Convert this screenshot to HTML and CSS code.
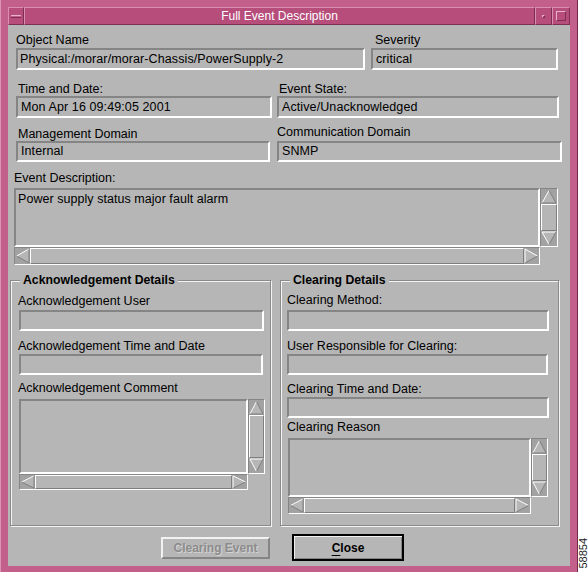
FILE: index.html
```html
<!DOCTYPE html>
<html>
<head>
<meta charset="utf-8">
<title>Full Event Description</title>
<link rel="stylesheet" href="styles.css">
</head>
<body>
<div class="screen">
  <div class="window">
    <div class="titlebar">
      <div class="tb-btn tb-menu"><span class="tb-minus"></span></div>
      <div class="tb-title">Full Event Description</div>
      <div class="tb-btn tb-min"><span class="tb-dot"></span></div>
      <div class="tb-btn tb-max"><span class="tb-square"></span></div>
    </div>
    <div class="client">
      <div class="row row1">
        <div class="cell c-obj"><div class="label">Object Name</div><div class="field">Physical:/morar/morar-Chassis/PowerSupply-2</div></div>
        <div class="cell c-sev"><div class="label">Severity</div><div class="field">critical</div></div>
      </div>
      <div class="row row2">
        <div class="cell c-time"><div class="label">Time and Date:</div><div class="field">Mon Apr 16 09:49:05 2001</div></div>
        <div class="cell c-state"><div class="label">Event State:</div><div class="field">Active/Unacknowledged</div></div>
      </div>
      <div class="row row3">
        <div class="cell c-mgmt"><div class="label">Management Domain</div><div class="field field-s">Internal</div></div>
        <div class="cell c-comm"><div class="label">Communication Domain</div><div class="field field-s">SNMP</div></div>
      </div>
      <div class="label l-desc">Event Description:</div>
      <div class="scrolled s-desc">
        <div class="stext">Power supply status major fault alarm</div>
        <div class="vscroll">
          <svg class="arrow" viewBox="0 0 16 15" preserveAspectRatio="none"><polygon points="8,1.5 15,14 1,14" fill="#b6b6b6"/><polyline points="1,14 8,1.5" stroke="#fff" fill="none"/><polyline points="8,1.5 15,14 1,14" stroke="#7e7e7e" fill="none"/></svg>
          <div class="slider"></div>
          <svg class="arrow" viewBox="0 0 16 15" preserveAspectRatio="none"><polygon points="1,1 15,1 8,13.5" fill="#b6b6b6"/><polyline points="8,13.5 1,1 15,1" stroke="#fff" fill="none"/><polyline points="15,1 8,13.5" stroke="#7e7e7e" fill="none"/></svg>
        </div>
        <div class="hscroll">
          <svg class="harrow" viewBox="0 0 15 16" preserveAspectRatio="none"><polygon points="1.5,8 14,1 14,15" fill="#b6b6b6"/><polyline points="14,1 1.5,8" stroke="#fff" fill="none"/><polyline points="1.5,8 14,15 14,1" stroke="#7e7e7e" fill="none"/></svg>
          <div class="slider"></div>
          <svg class="harrow" viewBox="0 0 15 16" preserveAspectRatio="none"><polygon points="1,1 13.5,8 1,15" fill="#b6b6b6"/><polyline points="1,15 1,1 13.5,8" stroke="#fff" fill="none"/><polyline points="13.5,8 1,15" stroke="#7e7e7e" fill="none"/></svg>
        </div>
        <div class="corner"></div>
      </div>

      <div class="groups">
        <fieldset class="group g-ack">
          <legend>Acknowledgement Details</legend>
          <div class="label">Acknowledgement User</div>
          <div class="field gfield a1"></div>
          <div class="label a-l2">Acknowledgement Time and Date</div>
          <div class="field gfield a2"></div>
          <div class="label a-l3">Acknowledgement Comment</div>
          <div class="scrolled s-ack">
            <div class="stext"></div>
            <div class="vscroll">
              <svg class="arrow" viewBox="0 0 16 15" preserveAspectRatio="none"><polygon points="8,1.5 15,14 1,14" fill="#b6b6b6"/><polyline points="1,14 8,1.5" stroke="#fff" fill="none"/><polyline points="8,1.5 15,14 1,14" stroke="#7e7e7e" fill="none"/></svg>
              <div class="slider"></div>
              <svg class="arrow" viewBox="0 0 16 15" preserveAspectRatio="none"><polygon points="1,1 15,1 8,13.5" fill="#b6b6b6"/><polyline points="8,13.5 1,1 15,1" stroke="#fff" fill="none"/><polyline points="15,1 8,13.5" stroke="#7e7e7e" fill="none"/></svg>
            </div>
            <div class="hscroll">
              <svg class="harrow" viewBox="0 0 15 16" preserveAspectRatio="none"><polygon points="1.5,8 14,1 14,15" fill="#b6b6b6"/><polyline points="14,1 1.5,8" stroke="#fff" fill="none"/><polyline points="1.5,8 14,15 14,1" stroke="#7e7e7e" fill="none"/></svg>
              <div class="slider"></div>
              <svg class="harrow" viewBox="0 0 15 16" preserveAspectRatio="none"><polygon points="1,1 13.5,8 1,15" fill="#b6b6b6"/><polyline points="1,15 1,1 13.5,8" stroke="#fff" fill="none"/><polyline points="13.5,8 1,15" stroke="#7e7e7e" fill="none"/></svg>
            </div>
            <div class="corner"></div>
          </div>
        </fieldset>
        <fieldset class="group g-clr">
          <legend>Clearing Details</legend>
          <div class="label c-l1">Clearing Method:</div>
          <div class="field gfield c1"></div>
          <div class="label c-l2">User Responsible for Clearing:</div>
          <div class="field gfield c2"></div>
          <div class="label c-l3">Clearing Time and Date:</div>
          <div class="field gfield c3"></div>
          <div class="label c-l4">Clearing Reason</div>
          <div class="scrolled s-clr">
            <div class="stext"></div>
            <div class="vscroll">
              <svg class="arrow" viewBox="0 0 16 15" preserveAspectRatio="none"><polygon points="8,1.5 15,14 1,14" fill="#b6b6b6"/><polyline points="1,14 8,1.5" stroke="#fff" fill="none"/><polyline points="8,1.5 15,14 1,14" stroke="#7e7e7e" fill="none"/></svg>
              <div class="slider"></div>
              <svg class="arrow" viewBox="0 0 16 15" preserveAspectRatio="none"><polygon points="1,1 15,1 8,13.5" fill="#b6b6b6"/><polyline points="8,13.5 1,1 15,1" stroke="#fff" fill="none"/><polyline points="15,1 8,13.5" stroke="#7e7e7e" fill="none"/></svg>
            </div>
            <div class="hscroll">
              <svg class="harrow" viewBox="0 0 15 16" preserveAspectRatio="none"><polygon points="1.5,8 14,1 14,15" fill="#b6b6b6"/><polyline points="14,1 1.5,8" stroke="#fff" fill="none"/><polyline points="1.5,8 14,15 14,1" stroke="#7e7e7e" fill="none"/></svg>
              <div class="slider"></div>
              <svg class="harrow" viewBox="0 0 15 16" preserveAspectRatio="none"><polygon points="1,1 13.5,8 1,15" fill="#b6b6b6"/><polyline points="1,15 1,1 13.5,8" stroke="#fff" fill="none"/><polyline points="13.5,8 1,15" stroke="#7e7e7e" fill="none"/></svg>
            </div>
            <div class="corner"></div>
          </div>
        </fieldset>
      </div>

      <div class="buttons">
        <div class="btn btn-disabled">Clearing Event</div>
        <div class="btn btn-default"><span><u>C</u>lose</span></div>
      </div>
    </div>
  </div>
  <div class="strip"><span class="fig">58854</span></div>
</div>
</body>
</html>
```
FILE: styles.css
```css
* { box-sizing: border-box; }
body {
  margin: 0;
  background: #fff;
  font-family: "Liberation Sans", Arial, sans-serif;
  color: #000;
}
.screen {
  display: flex;
  width: 588px;
  height: 572px;
  overflow: hidden;
}
.window {
  flex: none;
  width: 578px;
  height: 572px;
  background: #c2608b;
  border-left: 1px solid #dc93b4;
  border-right: 1px solid #74294a;
  padding: 7px 7px 0 7px;
  display: flex;
  flex-direction: column;
}
.titlebar {
  flex: none;
  height: 18px;
  display: flex;
  background: #b64d7b;
}
.tb-btn {
  flex: none;
  border: 1px solid;
  border-color: #da8fb1 #7c2f52 #7c2f52 #da8fb1;
  display: flex;
  align-items: center;
  justify-content: center;
}
.tb-menu { width: 16px; }
.tb-min { width: 17px; }
.tb-max { width: 18px; }
.tb-minus {
  width: 10px;
  height: 3px;
  border-top: 1px solid #e8b3ca;
  border-bottom: 1px solid #7c2f52;
  background: #c2608b;
}
.tb-dot {
  width: 3px;
  height: 3px;
  border: 1px solid;
  border-color: #e8b3ca #7c2f52 #7c2f52 #e8b3ca;
}
.tb-square {
  width: 10px;
  height: 10px;
  border: 1px solid;
  border-color: #e8b3ca #7c2f52 #7c2f52 #e8b3ca;
}
.tb-title {
  flex: 1;
  border: 1px solid;
  border-color: #da8fb1 #7c2f52 #7c2f52 #da8fb1;
  color: #fff;
  font-size: 12px;
  line-height: 16px;
  text-align: center;
}
.client {
  flex: none;
  height: 541px;
  background: #b6b6b6;
  display: flex;
  flex-direction: column;
  padding-top: 8px;
}
.label {
  font-size: 12.5px;
  line-height: 14px;
  height: 14px;
  white-space: nowrap;
}
.row {
  display: flex;
  align-items: flex-end;
}
.cell {
  display: flex;
  flex-direction: column;
}
.cell .label { margin-bottom: 1px; }
.field {
  height: 22px;
  border: 2px solid;
  border-color: #858585 #fff #fff #858585;
  padding: 2px 3px;
  font-size: 12.5px;
  line-height: 14px;
  letter-spacing: 0.1px;
  white-space: nowrap;
  overflow: hidden;
}
.field-s { height: 21px; padding-top: 1px; }

.c-obj { margin-left: 8px; width: 349px; }
.c-obj .field { padding-left: 2px; }
.c-sev { margin-left: 6px; width: 187px; }
.c-sev .label { padding-left: 4px; }

.row2 { margin-top: 12px; }
.row2 .cell .label { margin-bottom: 0; padding-left: 2px; }
.c-time { margin-left: 8px; width: 256px; }
.c-state { margin-left: 5px; width: 282px; }
.c-state .label { padding-left: 0; }

.row3 { margin-top: 7px; }
.c-mgmt { margin-left: 8px; width: 254px; }
.c-mgmt .label { padding-left: 2px; margin-bottom: 0; }
.c-comm { margin-left: 7px; width: 285px; }
.c-comm .label { margin-bottom: 2px; }

.l-desc { margin-top: 9px; margin-left: 6px; margin-bottom: 3px; }

.scrolled {
  display: grid;
}
.s-desc {
  margin-left: 6px;
  width: 544px;
  grid-template-columns: 526px 18px;
  grid-template-rows: 59px 18px;
}
.s-ack {
  margin-left: 1px;
  width: 246px;
  grid-template-columns: 229px 17px;
  grid-template-rows: 75px 16px;
}
.s-clr {
  margin-left: 1px;
  width: 260px;
  grid-template-columns: 243px 17px;
  grid-template-rows: 59px 17px;
}
.stext {
  border: 2px solid;
  border-color: #858585 #fff #fff #858585;
  padding: 2px 2px;
  font-size: 12.5px;
  line-height: 14px;
  letter-spacing: 0.05px;
  white-space: nowrap;
  overflow: hidden;
}
.vscroll {
  display: flex;
  flex-direction: column;
  background: #a2a2a2;
  border: 1px solid;
  border-color: #858585 #fff #fff #858585;
}
.hscroll {
  display: flex;
  background: #a2a2a2;
  border: 1px solid;
  border-color: #858585 #fff #fff #858585;
}
.arrow { flex: none; display: block; width: 100%; height: 15px; }
.harrow { flex: none; display: block; width: 15px; height: 100%; }
.slider {
  flex: 1;
  background: #b6b6b6;
  border: 1px solid;
  border-color: #fff #7e7e7e #7e7e7e #fff;
}
.corner { background: transparent; }

.groups {
  display: flex;
  margin-top: 8px;
  margin-left: 2px;
  gap: 9px;
}
.group {
  margin: 0;
  min-width: 0;
  height: 253px;
  border: 1px solid #8a8a8a;
  box-shadow: inset 1px 1px 0 #f4f4f4, 1px 1px 0 #f4f4f4;
  display: flex;
  flex-direction: column;
}
.group legend {
  font-size: 12.25px;
  font-weight: bold;
  line-height: 14px;
  padding: 0 3px;
  background: #b6b6b6;
  white-space: nowrap;
}
.g-ack { width: 261px; padding: 7px 0 0 7px; }
.g-ack legend { margin-left: 2px; }
.g-clr { width: 279px; padding: 6px 0 0 6px; }
.g-clr legend { margin-left: 3px; }

.gfield { height: 21px; }
.a1 { margin-top: 2px; margin-left: 1px; width: 245px; }
.a-l2 { margin-top: 8px; }
.a2 { margin-top: 1px; margin-left: 1px; width: 244px; }
.a-l3 { margin-top: 6px; margin-bottom: 4px; }

.c1 { margin-top: 3px; width: 262px; }
.c-l2 { margin-top: 8px; }
.c2 { margin-top: 1px; width: 261px; }
.c-l3 { margin-top: 7px; }
.c3 { margin-top: 1px; width: 262px; }
.c-l4 { margin-top: 2px; margin-bottom: 4px; }

.buttons {
  display: flex;
  align-items: center;
  margin-top: 8px;
  margin-left: 153px;
  gap: 22px;
}
.btn {
  display: flex;
  align-items: center;
  justify-content: center;
  font-size: 12px;
  font-weight: bold;
  line-height: 14px;
}
.btn-disabled {
  width: 109px;
  height: 22px;
  border: 2px solid;
  border-color: #f2f2f2 #858585 #858585 #f2f2f2;
  color: #8c8c8c;
  text-shadow: 1px 1px 0 #d4d4d4;
}
.btn-default {
  width: 112px;
  height: 27px;
  border: 2px solid #000;
  box-shadow: inset 1px 1px 0 #f2f2f2, inset -1px -1px 0 #858585;
}
.btn-default u {
  text-underline-offset: 3px;
}
.strip {
  flex: 1;
  display: flex;
  align-items: flex-end;
  justify-content: center;
  padding-bottom: 3px;
}
.fig {
  writing-mode: vertical-rl;
  transform: rotate(180deg);
  font-size: 11px;
  line-height: 10px;
  color: #222;
}
```
